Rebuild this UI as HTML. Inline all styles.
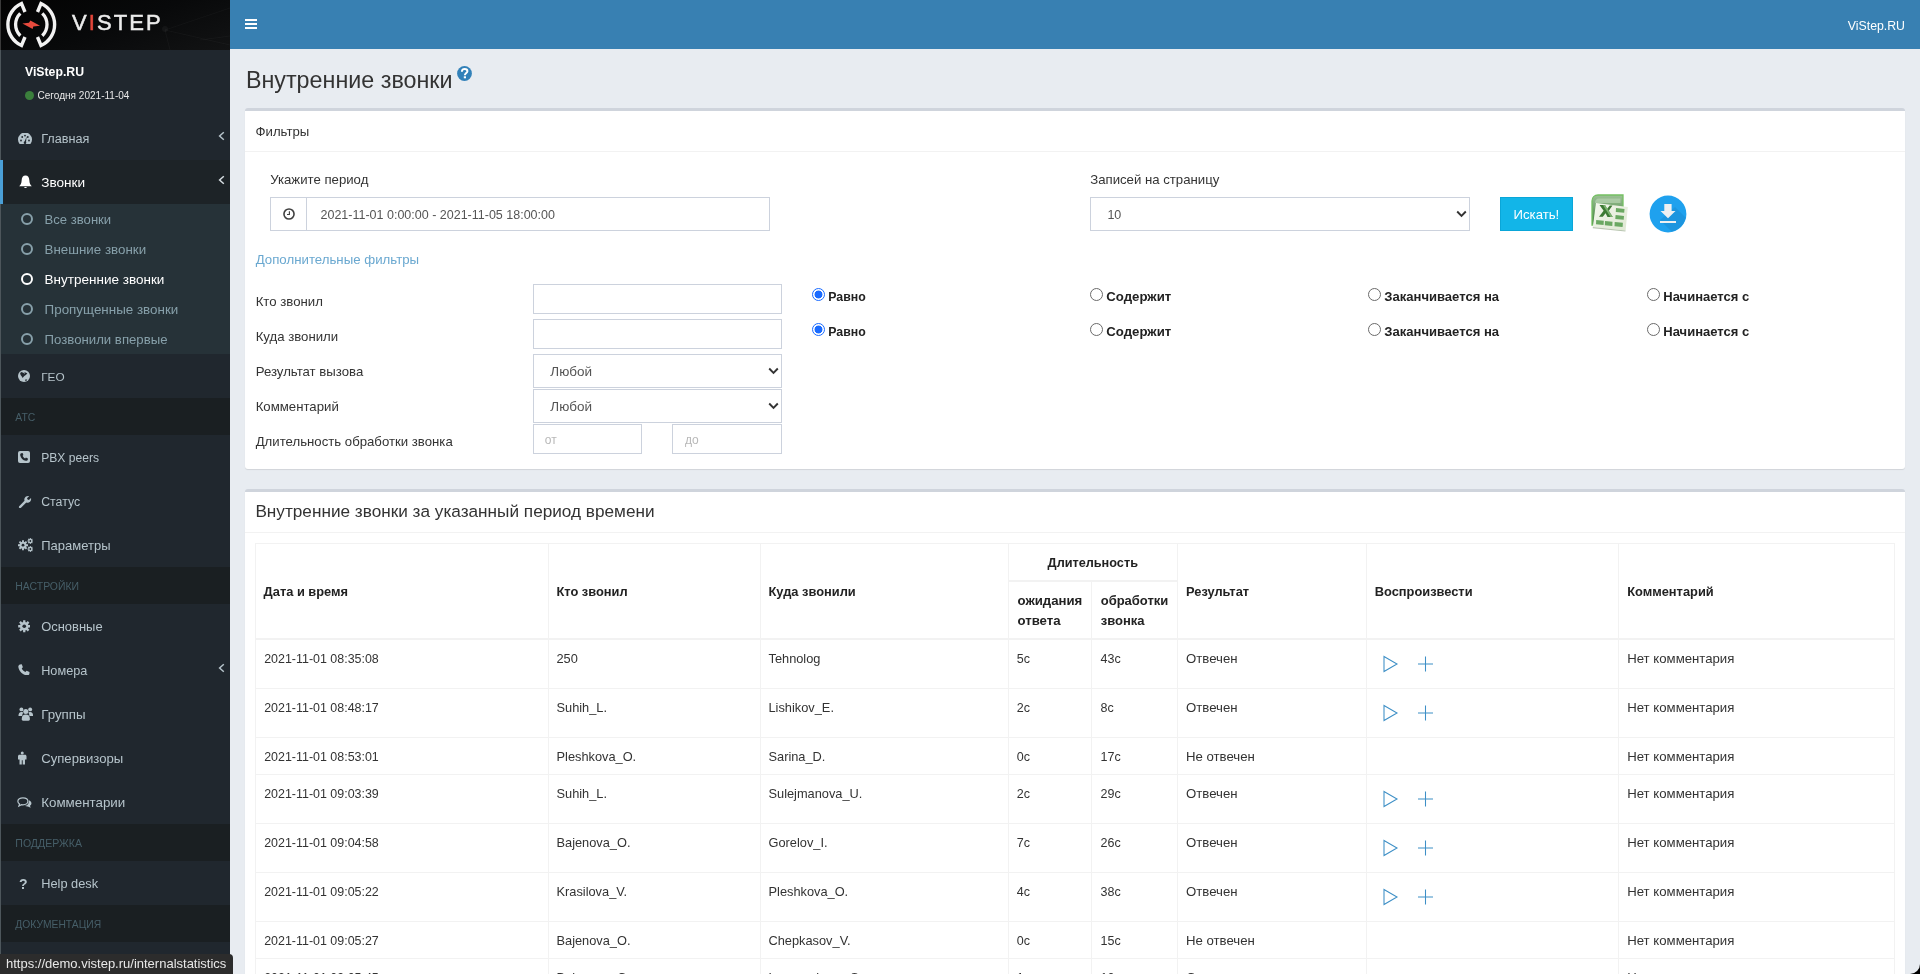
<!DOCTYPE html>
<html><head><meta charset="utf-8">
<style>
*{box-sizing:border-box;margin:0;padding:0}
html,body{width:1920px;height:974px;overflow:hidden}
body{position:relative;background:#e8ecf1;font-family:"Liberation Sans",sans-serif;color:#333;font-size:13px}
.t{position:absolute;line-height:1;white-space:nowrap;color:#333}
.r{position:absolute}
.box{background:#fff;border-top:3px solid #cfd4dc;border-radius:3px;box-shadow:0 1px 1px rgba(0,0,0,0.1)}
.inp{background:#fff;border:1px solid #ccd2dd}
.rad{position:absolute;width:13px;height:13px;border-radius:50%;border:1px solid #6a6a6a;background:#fff}
.rad.on{border:1.5px solid #1a6bff;background:radial-gradient(circle,#1a6bff 0,#1a6bff 3.6px,#fff 4.3px)}
</style></head><body>
<div style="position:absolute;left:0;top:0;width:1920px;height:974px;will-change:transform">
<div class="r " style="left:0px;top:0px;width:230px;height:50px;background:linear-gradient(160deg,#030303 0%,#08090a 50%,#121314 100%);overflow:hidden"></div>
<svg class="r" style="left:130px;top:0px" width="100" height="50" viewBox="0 0 100 50"><g stroke="rgba(255,255,255,0.03)" stroke-width="1" fill="none"><path d="M35 30 L100 8 M35 30 L100 45 M35 30 L40 50 M70 40 L100 36"/></g><circle cx="35" cy="29" r="3" fill="rgba(255,255,255,0.04)"/></svg>
<svg class="r" style="left:0px;top:0px" width="64" height="50" viewBox="0 0 64 50"><g fill="none" stroke="#f2f2f2" stroke-width="3.4"><path d="M25 12 L21.5 3.5 A23 23 0 0 0 21.5 45.5 L25 37"/><path d="M37.5 12 L41 3.5 A23 23 0 0 1 41 45.5 L37.5 37"/></g><g fill="none" stroke="#f2f2f2" stroke-width="3.3"><path d="M20.3 13.4 A15.7 15.7 0 0 0 20.3 35.8"/><path d="M42.3 13.4 A15.7 15.7 0 0 1 42.3 35.8"/></g><path d="M22.4 23.4 L29 22.8 L30.4 20.6 L40 25.7 L33.3 26.4 L32.7 28.9 Z" fill="#e84a3d"/></svg>
<div class="t" style="left:72px;top:11px;font-size:22px;letter-spacing:2.1px;color:#ececec;line-height:24px;-webkit-text-stroke-width:0.5px">V<span style="color:#e5473b">I</span>STEP</div>
<div class="r " style="left:0px;top:0px;width:1px;height:50px;background:#3a3a3a"></div>
<div class="r " style="left:230px;top:0px;width:1690px;height:49px;background:#3880b2"></div>
<div class="r " style="left:245px;top:19px;width:12px;height:2px;background:#fff"></div>
<div class="r " style="left:245px;top:23px;width:12px;height:2px;background:#fff"></div>
<div class="r " style="left:245px;top:27px;width:12px;height:2px;background:#fff"></div>
<div class="t" style="left:1847.8px;top:20.00px;font-size:12.3px;color:#fff">ViStep.RU</div>
<div class="r " style="left:0px;top:50px;width:230px;height:924px;background:#20272e"></div>
<div class="r " style="left:0px;top:50px;width:1px;height:924px;background:#4d565b"></div>
<div class="t" style="left:25px;top:66.00px;font-size:12.25px;font-weight:bold;color:#fff">ViStep.RU</div>
<div class="r " style="left:25px;top:90.5px;width:9px;height:9px;background:#3b7f3c;border-radius:50%"></div>
<div class="t" style="left:37.5px;top:91.00px;font-size:10.05px;color:#e8e8e8">Сегодня 2021-11-04</div>
<svg class="r" style="left:18px;top:133px" width="14" height="11" viewBox="0 0 14 11"><path d="M1.6 11 A7 7 0 1 1 12.4 11 Z" fill="#b6c4cb"/><g fill="#20272e"><circle cx="3" cy="7.5" r="0.9"/><circle cx="4.2" cy="4" r="0.9"/><circle cx="7" cy="2.6" r="0.9"/><circle cx="9.8" cy="4" r="0.9"/><circle cx="11" cy="7.5" r="0.9"/><path d="M6 10 L8.6 3.6 L7.9 10 Z"/><circle cx="7" cy="9.7" r="1.3"/></g></svg>
<div class="t" style="left:41.2px;top:133.00px;font-size:12.65px;color:#b6c4cb">Главная</div>
<svg class="r" style="left:217px;top:131px" width="9" height="10" viewBox="0 0 9 10"><path d="M6.8 1.2 L2.6 5 L6.8 8.8" fill="none" stroke="#b6c4cb" stroke-width="1.5"/></svg>
<div class="r " style="left:0px;top:160px;width:230px;height:44px;background:#1d2327"></div>
<div class="r " style="left:0px;top:160px;width:3px;height:44px;background:#4a9fd6"></div>
<svg class="r" style="left:18.5px;top:175px" width="13" height="14" viewBox="0 0 13 14"><path d="M6.5 0.5 C9 0.5 10.2 2.5 10.3 5 C10.4 8.5 11.5 10 12.8 11.3 L0.2 11.3 C1.5 10 2.6 8.5 2.7 5 C2.8 2.5 4 0.5 6.5 0.5 Z M5 12 A1.6 1.6 0 0 0 8 12 Z" fill="#fff"/></svg>
<div class="t" style="left:41.2px;top:176.00px;font-size:13.6px;color:#fff">Звонки</div>
<svg class="r" style="left:217px;top:175px" width="9" height="10" viewBox="0 0 9 10"><path d="M6.8 1.2 L2.6 5 L6.8 8.8" fill="none" stroke="#d8dfe3" stroke-width="1.5"/></svg>
<div class="r " style="left:0px;top:204px;width:230px;height:150px;background:#263238"></div>
<div class="r " style="left:21px;top:213px;width:12px;height:12px;border:2px solid #87a0aa;border-radius:50%"></div>
<div class="t" style="left:44.6px;top:213.00px;font-size:13.1px;color:#87a0aa">Все звонки</div>
<div class="r " style="left:21px;top:243px;width:12px;height:12px;border:2px solid #87a0aa;border-radius:50%"></div>
<div class="t" style="left:44.6px;top:243.00px;font-size:13.35px;color:#87a0aa">Внешние звонки</div>
<div class="r " style="left:21px;top:273px;width:12px;height:12px;border:2px solid #fff;border-radius:50%"></div>
<div class="t" style="left:44.6px;top:273.00px;font-size:13.5px;color:#fff">Внутренние звонки</div>
<div class="r " style="left:21px;top:303px;width:12px;height:12px;border:2px solid #87a0aa;border-radius:50%"></div>
<div class="t" style="left:44.6px;top:303.00px;font-size:13.4px;color:#87a0aa">Пропущенные звонки</div>
<div class="r " style="left:21px;top:333px;width:12px;height:12px;border:2px solid #87a0aa;border-radius:50%"></div>
<div class="t" style="left:44.6px;top:333.00px;font-size:13.2px;color:#87a0aa">Позвонили впервые</div>
<svg class="r" style="left:18px;top:370px" width="12" height="12" viewBox="0 0 12 12"><circle cx="6" cy="6" r="6" fill="#b6c4cb"/><path d="M2.1 3.1 L3.6 2 L5.6 2.9 L6.4 2.2 L7.6 2.6 L9.4 3.4 L7.8 4.9 L6.3 5.9 L5.4 6.9 L4.7 8.1 L3.8 6.6 L2.6 4.9 Z M7.2 9.4 L9.3 9.5 L8.5 10.8 L7.3 11.1 Z" fill="#20272e"/><circle cx="6.4" cy="3.0" r="0.6" fill="#b6c4cb"/></svg>
<div class="t" style="left:41.2px;top:372.00px;font-size:11.8px;color:#b6c4cb">ГЕО</div>
<div class="r " style="left:0px;top:398px;width:230px;height:37px;background:#1a1f22"></div>
<div class="t" style="left:15.3px;top:413.00px;font-size:10.4px;color:#465e68">АТС</div>
<svg class="r" style="left:18px;top:451px" width="12" height="12" viewBox="0 0 12 12"><rect x="0" y="0" width="12" height="12" rx="2" fill="#b6c4cb"/><path d="M3.2 2.2 L4.6 2 L5.4 4 L4.6 4.8 C5 6 5.9 7 7.1 7.4 L7.9 6.6 L9.9 7.4 L9.8 8.8 C9.5 9.6 8.7 9.9 7.8 9.8 C5 9.3 2.7 7 2.2 4.2 C2.1 3.3 2.5 2.5 3.2 2.2 Z" fill="#20272e"/></svg>
<div class="t" style="left:41.2px;top:452.00px;font-size:12.1px;color:#b6c4cb">PBX peers</div>
<svg class="r" style="left:17.8px;top:495px" width="14" height="13" viewBox="0 0 14 13"><path d="M1.2 11.2 L6.5 5.8 C6 4.2 6.5 2.5 8 1.5 C9 0.9 10.2 0.8 11.2 1.1 L9 3.3 L9.6 4.6 L10.9 5.1 L13 3 C13.3 4.1 13.1 5.3 12.4 6.2 C11.4 7.5 9.8 8 8.3 7.5 L3 12.8 C2.5 13.3 1.7 13.3 1.2 12.8 C0.7 12.4 0.7 11.7 1.2 11.2 Z" fill="#b6c4cb"/></svg>
<div class="t" style="left:41.2px;top:496.00px;font-size:12.3px;color:#b6c4cb">Статус</div>
<svg class="r" style="left:17.8px;top:538px" width="15.5" height="14" viewBox="0 0 15.5 14"><g fill="#b6c4cb"><circle cx="5" cy="7.2" r="3.5"/><circle cx="12.3" cy="3" r="2.0"/><circle cx="12.3" cy="11" r="2.0"/></g><path d="M0.00 7.20 L10.00 7.20 M1.46 3.66 L8.54 10.74 M5.00 2.20 L5.00 12.20 M8.54 3.66 L1.46 10.74 " stroke="#b6c4cb" stroke-width="1.9"/><path d="M9.40 3.00 L15.20 3.00 M10.25 0.95 L14.35 5.05 M12.30 0.10 L12.30 5.90 M14.35 0.95 L10.25 5.05 M9.40 11.00 L15.20 11.00 M10.25 8.95 L14.35 13.05 M12.30 8.10 L12.30 13.90 M14.35 8.95 L10.25 13.05 " stroke="#b6c4cb" stroke-width="1.1"/><g fill="#20272e"><circle cx="5" cy="7.2" r="1.4"/><circle cx="12.3" cy="3" r="0.9"/><circle cx="12.3" cy="11" r="0.9"/></g></svg>
<div class="t" style="left:41.2px;top:539.00px;font-size:13.0px;color:#b6c4cb">Параметры</div>
<div class="r " style="left:0px;top:567px;width:230px;height:37px;background:#1a1f22"></div>
<div class="t" style="left:15.3px;top:582.00px;font-size:10.45px;color:#465e68">НАСТРОЙКИ</div>
<svg class="r" style="left:17.8px;top:620px" width="12.5" height="12.5" viewBox="0 0 13 13"><g fill="#b6c4cb"><circle cx="6.5" cy="6.5" r="4.5"/><g stroke="#b6c4cb" stroke-width="2.4"><path d="M6.5 0.2 V12.8 M0.2 6.5 H12.8 M2 2 L11 11 M11 2 L2 11"/></g></g><circle cx="6.5" cy="6.5" r="1.9" fill="#20272e"/></svg>
<div class="t" style="left:41.2px;top:621.00px;font-size:12.95px;color:#b6c4cb">Основные</div>
<svg class="r" style="left:17.8px;top:663.6px" width="11.8" height="11.8" viewBox="0 0 12 12"><path d="M1.8 0.4 L3.8 0.2 L5 3.2 L3.8 4.4 C4.4 6 5.8 7.5 7.5 8.1 L8.7 6.9 L11.7 8.1 L11.6 10.1 C11.2 11.4 10 11.8 8.8 11.6 C4.7 10.9 1.1 7.3 0.4 3.2 C0.2 2 0.6 0.9 1.8 0.4 Z" fill="#b6c4cb"/></svg>
<div class="t" style="left:41.2px;top:665.00px;font-size:12.7px;color:#b6c4cb">Номера</div>
<svg class="r" style="left:217px;top:663px" width="9" height="10" viewBox="0 0 9 10"><path d="M6.8 1.2 L2.6 5 L6.8 8.8" fill="none" stroke="#b6c4cb" stroke-width="1.5"/></svg>
<svg class="r" style="left:17.8px;top:706.7px" width="15.6" height="14" viewBox="0 0 16 14"><g fill="#b6c4cb"><circle cx="3.5" cy="2.3" r="2"/><circle cx="12.5" cy="2.3" r="2"/><circle cx="8" cy="4.5" r="2.6"/><path d="M0.5 9 C0.5 6.5 1.5 5 3.5 5 C4.5 5 5 5.3 5.3 5.6 C4.6 6.5 4.3 7.6 4.3 9 Z"/><path d="M15.5 9 C15.5 6.5 14.5 5 12.5 5 C11.5 5 11 5.3 10.7 5.6 C11.4 6.5 11.7 7.6 11.7 9 Z"/><path d="M3.8 12.5 C3.8 9 5.3 7.6 8 7.6 C10.7 7.6 12.2 9 12.2 12.5 C12.2 13.3 11.6 13.8 10.8 13.8 H5.2 C4.4 13.8 3.8 13.3 3.8 12.5 Z"/></g></svg>
<div class="t" style="left:41.2px;top:708.00px;font-size:13.3px;color:#b6c4cb">Группы</div>
<svg class="r" style="left:18px;top:751.2px" width="8.5" height="14" viewBox="0 0 9 14"><g fill="#b6c4cb"><circle cx="4.5" cy="1.6" r="1.6"/><path d="M1.5 3.6 H7.5 C8.3 3.6 9 4.3 9 5.1 V8.6 H7.4 V14 H5 V9.4 H4 V14 H1.6 V8.6 H0 V5.1 C0 4.3 0.7 3.6 1.5 3.6 Z"/></g></svg>
<div class="t" style="left:41.2px;top:752.00px;font-size:13.15px;color:#b6c4cb">Супервизоры</div>
<svg class="r" style="left:17.4px;top:796.5px" width="15" height="11.5" viewBox="0 0 16 12"><g fill="none" stroke="#b6c4cb" stroke-width="1.3"><path d="M6.3 0.8 C9.4 0.8 11.6 2.4 11.6 4.5 C11.6 6.6 9.4 8.2 6.3 8.2 C5.8 8.2 5.3 8.2 4.8 8.1 L2 9.6 L2.7 7.4 C1.5 6.7 0.9 5.7 0.9 4.5 C0.9 2.4 3.2 0.8 6.3 0.8 Z"/></g><path d="M12.6 3.2 C14.3 3.8 15.4 5 15.4 6.5 C15.4 7.6 14.8 8.5 13.8 9.1 L14.6 11.4 L11.6 9.9 C10.6 10 9.3 9.8 8.2 9.2 C10.9 8.9 12.9 7.3 12.6 3.2 Z" fill="#b6c4cb"/></svg>
<div class="t" style="left:41.2px;top:796.00px;font-size:13.35px;color:#b6c4cb">Комментарии</div>
<div class="r " style="left:0px;top:824px;width:230px;height:37px;background:#1a1f22"></div>
<div class="t" style="left:15.3px;top:838.00px;font-size:10.55px;color:#465e68">ПОДДЕРЖКА</div>
<div class="t" style="left:19px;top:877.00px;font-size:14.0px;font-weight:bold;color:#b6c4cb">?</div>
<div class="t" style="left:41.2px;top:878.00px;font-size:12.8px;color:#b6c4cb">Help desk</div>
<div class="r " style="left:0px;top:905px;width:230px;height:37px;background:#1a1f22"></div>
<div class="t" style="left:15.3px;top:920.00px;font-size:10.3px;color:#465e68">ДОКУМЕНТАЦИЯ</div>
<div class="r " style="left:0px;top:50px;width:1px;height:924px;background:#4d565b"></div>
<div class="r " style="left:0px;top:160px;width:3px;height:44px;background:#4a9fd6"></div>
<div class="t" style="left:245.9px;top:69.00px;font-size:23.3px;color:#333">Внутренние звонки</div>
<svg class="r" style="left:457px;top:65.5px" width="15" height="15" viewBox="0 0 15 15"><circle cx="7.5" cy="7.5" r="7.4" fill="#3281b9"/><path d="M4.9 5.7 C4.9 3.7 6.2 2.9 7.6 2.9 C9.3 2.9 10.4 3.9 10.4 5.2 C10.4 6.9 7.9 7.1 7.9 9.3" fill="none" stroke="#fff" stroke-width="2"/><rect x="6.8" y="10.3" width="2.2" height="2" fill="#fff"/></svg>
<div class="r box" style="left:245px;top:108px;width:1660px;height:361px;"></div>
<div class="r " style="left:245px;top:151px;width:1660px;height:1px;background:#f2f2f2"></div>
<div class="t" style="left:255.5px;top:125.00px;font-size:13.2px">Фильтры</div>
<div class="t" style="left:270.2px;top:173.00px;font-size:13.2px">Укажите период</div>
<div class="r inp" style="left:270px;top:197px;width:500px;height:34px;"></div>
<div class="r " style="left:306px;top:197px;width:1px;height:34px;background:#ccd2dd"></div>
<svg class="r" style="left:283px;top:208px" width="12" height="12" viewBox="0 0 12 12"><circle cx="6" cy="6" r="5.05" fill="none" stroke="#404040" stroke-width="1.6"/><path d="M6.4 3.3 V6.5 H4" fill="none" stroke="#404040" stroke-width="1.15"/></svg>
<div class="t" style="left:320.5px;top:209.00px;font-size:12.5px;color:#555">2021-11-01 0:00:00 - 2021-11-05 18:00:00</div>
<div class="t" style="left:1090.2px;top:173.00px;font-size:13.2px">Записей на страницу</div>
<div class="r inp" style="left:1090px;top:197px;width:380px;height:34px;"></div>
<div class="t" style="left:1107.4px;top:209.00px;font-size:12.5px;color:#555">10</div>
<svg class="r" style="left:1456px;top:210px" width="11" height="8" viewBox="0 0 11 8"><path d="M1.2 1.5 L5.5 5.8 L9.8 1.5" fill="none" stroke="#333" stroke-width="1.9"/></svg>
<div class="r " style="left:1500px;top:197px;width:73px;height:34px;background:#12b5e8;border:1px solid #0aa6d8"></div>
<div class="t" style="left:1513.5px;top:208.00px;font-size:13.2px;color:#fff">Искать!</div>
<svg class="r" style="left:1589px;top:193px" width="40" height="40" viewBox="0 0 40 40">
<defs><linearGradient id="xg" x1="0" y1="0" x2="0" y2="1"><stop offset="0" stop-color="#9cc196"/><stop offset="1" stop-color="#3f7f3a"/></linearGradient>
<linearGradient id="sg" x1="0" y1="0" x2="1" y2="1"><stop offset="0" stop-color="#f4f7ee"/><stop offset="1" stop-color="#dfe8d3"/></linearGradient></defs>
<path d="M9 2 H34 V32 H3 V8 C3 4.5 5.5 2 9 2 Z" fill="url(#xg)" stroke="#74c062" stroke-width="1.3"/>
<path d="M6 10 C6 7 7.5 5.5 10 5.5 H31.5 V10 Z" fill="#c5dcc0" opacity="0.55"/>
<path d="M7 10 L38.8 13.9 L36.6 37.4 L3.8 34.1 Z" fill="url(#sg)"/>
<path d="M3.8 34.1 L36.6 37.4 L36.4 38.6 L3.8 35.3 Z" fill="#b9c6b0"/>
<g fill="#6aa862">
<path d="M27 15 L35.5 16 L35.2 19.8 L26.8 18.9 Z"/><path d="M26.6 22 L35 22.9 L34.7 26.8 L26.3 26 Z"/>
<path d="M7.2 27 L14.8 27.8 L14.6 32 L7 31.2 Z"/><path d="M16 28 L23.5 28.8 L23.3 33 L15.8 32.2 Z"/><path d="M25.7 29 L33.9 29.8 L33.6 34 L25.5 33.2 Z"/>
</g>
<path d="M10.5 12 H16 L18.2 15.8 L20.8 12.4 H23.5 L19.8 17.8 L23.8 24 H18.5 L16.6 20.2 L13.8 23.8 H10 L14.6 17.8 Z" fill="#3d7a35"/>
<path d="M16 12 L23.8 24 H21.5 L14 12.2 Z" fill="#8cc07f" opacity="0.8"/>
</svg>
<svg class="r" style="left:1649px;top:195px" width="38" height="38" viewBox="0 0 38 38">
<circle cx="19" cy="19" r="18.4" fill="#1fa1ee"/>
<path d="M26 12 L36.8 22.8 A18.4 18.4 0 0 1 22.8 36.8 L11 25 Z" fill="#1a8ed6" opacity="0.6"/>
<path d="M15.3 9 H22.6 V16 H26.5 L19 23.2 L11.5 16 H15.3 Z" fill="#eef0f2"/>
<rect x="11" y="26" width="16" height="2" fill="#eef0f2"/>
</svg>
<div class="t" style="left:255.7px;top:253.00px;font-size:13.25px;color:#6aa8d0">Дополнительные фильтры</div>
<div class="t" style="left:255.7px;top:295.00px;font-size:13.2px">Кто звонил</div>
<div class="t" style="left:255.7px;top:330.00px;font-size:13.2px">Куда звонили</div>
<div class="t" style="left:255.7px;top:365.00px;font-size:13.2px">Результат вызова</div>
<div class="t" style="left:255.7px;top:400.00px;font-size:13.2px">Комментарий</div>
<div class="t" style="left:255.7px;top:435.00px;font-size:13.2px">Длительность обработки звонка</div>
<div class="r inp" style="left:533px;top:284px;width:249px;height:30px;"></div>
<div class="r inp" style="left:533px;top:319px;width:249px;height:30px;"></div>
<div class="r inp" style="left:533px;top:354px;width:249px;height:34px;"></div>
<div class="r inp" style="left:533px;top:389px;width:249px;height:34px;"></div>
<div class="r inp" style="left:533px;top:424px;width:109px;height:30px;"></div>
<div class="r inp" style="left:672px;top:424px;width:110px;height:30px;"></div>
<div class="t" style="left:550.3px;top:365.00px;font-size:13.5px;color:#555">Любой</div>
<svg class="r" style="left:768px;top:367px" width="11" height="8" viewBox="0 0 11 8"><path d="M1.2 1.5 L5.5 5.8 L9.8 1.5" fill="none" stroke="#333" stroke-width="1.9"/></svg>
<div class="t" style="left:550.3px;top:400.00px;font-size:13.5px;color:#555">Любой</div>
<svg class="r" style="left:768px;top:402px" width="11" height="8" viewBox="0 0 11 8"><path d="M1.2 1.5 L5.5 5.8 L9.8 1.5" fill="none" stroke="#333" stroke-width="1.9"/></svg>
<div class="t" style="left:544.8px;top:434.00px;font-size:12.0px;color:#b8b8b8">от</div>
<div class="t" style="left:685px;top:434.00px;font-size:12.0px;color:#b8b8b8">до</div>
<div class="rad on" style="left:812px;top:288px"></div>
<div class="t" style="left:828.3px;top:291.00px;font-size:12.3px;font-weight:bold;color:#222">Равно</div>
<div class="rad" style="left:1090px;top:288px"></div>
<div class="t" style="left:1106.3px;top:290.00px;font-size:13.2px;font-weight:bold;color:#222">Содержит</div>
<div class="rad" style="left:1368px;top:288px"></div>
<div class="t" style="left:1384.3px;top:290.00px;font-size:13.05px;font-weight:bold;color:#222">Заканчивается на</div>
<div class="rad" style="left:1647px;top:288px"></div>
<div class="t" style="left:1663.3px;top:290.00px;font-size:13.0px;font-weight:bold;color:#222">Начинается с</div>
<div class="rad on" style="left:812px;top:323px"></div>
<div class="t" style="left:828.3px;top:326.00px;font-size:12.3px;font-weight:bold;color:#222">Равно</div>
<div class="rad" style="left:1090px;top:323px"></div>
<div class="t" style="left:1106.3px;top:325.00px;font-size:13.2px;font-weight:bold;color:#222">Содержит</div>
<div class="rad" style="left:1368px;top:323px"></div>
<div class="t" style="left:1384.3px;top:325.00px;font-size:13.05px;font-weight:bold;color:#222">Заканчивается на</div>
<div class="rad" style="left:1647px;top:323px"></div>
<div class="t" style="left:1663.3px;top:325.00px;font-size:13.0px;font-weight:bold;color:#222">Начинается с</div>
<div class="r box" style="left:245px;top:489px;width:1660px;height:500px;"></div>
<div class="r " style="left:245px;top:532px;width:1660px;height:1px;background:#f2f2f2"></div>
<div class="t" style="left:255.4px;top:503.00px;font-size:17.2px">Внутренние звонки за указанный период времени</div>
<div class="r " style="left:255px;top:543px;width:1640px;height:1px;background:#f2f2f2"></div>
<div class="r " style="left:255px;top:638px;width:1640px;height:2px;background:#f2f2f2"></div>
<div class="r " style="left:1008px;top:580px;width:169px;height:2px;background:#f2f2f2"></div>
<div class="r " style="left:256px;top:688px;width:1638px;height:1px;background:#f2f2f2"></div>
<div class="r " style="left:256px;top:737px;width:1638px;height:1px;background:#f2f2f2"></div>
<div class="r " style="left:256px;top:774px;width:1638px;height:1px;background:#f2f2f2"></div>
<div class="r " style="left:256px;top:823px;width:1638px;height:1px;background:#f2f2f2"></div>
<div class="r " style="left:256px;top:872px;width:1638px;height:1px;background:#f2f2f2"></div>
<div class="r " style="left:256px;top:921px;width:1638px;height:1px;background:#f2f2f2"></div>
<div class="r " style="left:256px;top:958px;width:1638px;height:1px;background:#f2f2f2"></div>
<div class="r " style="left:256px;top:1007px;width:1638px;height:1px;background:#f2f2f2"></div>
<div class="r " style="left:255px;top:543px;width:1px;height:465px;background:#f2f2f2"></div>
<div class="r " style="left:548px;top:543px;width:1px;height:465px;background:#f2f2f2"></div>
<div class="r " style="left:760px;top:543px;width:1px;height:465px;background:#f2f2f2"></div>
<div class="r " style="left:1008px;top:543px;width:1px;height:465px;background:#f2f2f2"></div>
<div class="r " style="left:1091px;top:580px;width:1px;height:428px;background:#f2f2f2"></div>
<div class="r " style="left:1177px;top:543px;width:1px;height:465px;background:#f2f2f2"></div>
<div class="r " style="left:1366px;top:543px;width:1px;height:465px;background:#f2f2f2"></div>
<div class="r " style="left:1618px;top:543px;width:1px;height:465px;background:#f2f2f2"></div>
<div class="r " style="left:1894px;top:543px;width:1px;height:465px;background:#f2f2f2"></div>
<div class="t" style="left:263.6px;top:586.00px;font-size:12.85px;font-weight:bold;color:#222">Дата и время</div>
<div class="t" style="left:556.5px;top:586.00px;font-size:12.85px;font-weight:bold;color:#222">Кто звонил</div>
<div class="t" style="left:768.5px;top:586.00px;font-size:12.85px;font-weight:bold;color:#222">Куда звонили</div>
<div class="t" style="left:1186px;top:586.00px;font-size:12.85px;font-weight:bold;color:#222">Результат</div>
<div class="t" style="left:1374.7px;top:586.00px;font-size:12.85px;font-weight:bold;color:#222">Воспроизвести</div>
<div class="t" style="left:1627.2px;top:586.00px;font-size:12.85px;font-weight:bold;color:#222">Комментарий</div>
<div class="t" style="left:1047.6px;top:557.00px;font-size:12.7px;font-weight:bold;color:#222">Длительность</div>
<div class="t" style="left:1017.5px;top:594.00px;font-size:13.2px;font-weight:bold;color:#222">ожидания</div>
<div class="t" style="left:1017.5px;top:614.00px;font-size:13.2px;font-weight:bold;color:#222">ответа</div>
<div class="t" style="left:1100.7px;top:594.00px;font-size:13.0px;font-weight:bold;color:#222">обработки</div>
<div class="t" style="left:1100.7px;top:614.00px;font-size:13.0px;font-weight:bold;color:#222">звонка</div>
<div class="t" style="left:264.2px;top:653.00px;font-size:12.45px">2021-11-01 08:35:08</div>
<div class="t" style="left:556.5px;top:653.00px;font-size:12.8px">250</div>
<div class="t" style="left:768.5px;top:653.00px;font-size:12.8px">Tehnolog</div>
<div class="t" style="left:1016.8px;top:653.00px;font-size:12.5px">5c</div>
<div class="t" style="left:1100.6px;top:653.00px;font-size:12.5px">43с</div>
<div class="t" style="left:1186px;top:652.00px;font-size:13.2px">Отвечен</div>
<div class="t" style="left:1627.2px;top:652.00px;font-size:13.2px">Нет комментария</div>
<svg class="r" style="left:1382px;top:655px" width="17" height="18" viewBox="0 0 17 18"><path d="M2 1.5 L15 9 L2 16.5 Z" fill="none" stroke="#3d8fc6" stroke-width="1.05" stroke-linejoin="miter"/></svg>
<svg class="r" style="left:1417px;top:655px" width="17" height="18" viewBox="0 0 17 18"><path d="M8.5 1.5 V16.5 M1 9 H16" fill="none" stroke="#3d8fc6" stroke-width="1.05"/></svg>
<div class="t" style="left:264.2px;top:702.00px;font-size:12.45px">2021-11-01 08:48:17</div>
<div class="t" style="left:556.5px;top:702.00px;font-size:12.8px">Suhih_L.</div>
<div class="t" style="left:768.5px;top:702.00px;font-size:12.8px">Lishikov_E.</div>
<div class="t" style="left:1016.8px;top:702.00px;font-size:12.5px">2c</div>
<div class="t" style="left:1100.6px;top:702.00px;font-size:12.5px">8c</div>
<div class="t" style="left:1186px;top:701.00px;font-size:13.2px">Отвечен</div>
<div class="t" style="left:1627.2px;top:701.00px;font-size:13.2px">Нет комментария</div>
<svg class="r" style="left:1382px;top:704px" width="17" height="18" viewBox="0 0 17 18"><path d="M2 1.5 L15 9 L2 16.5 Z" fill="none" stroke="#3d8fc6" stroke-width="1.05" stroke-linejoin="miter"/></svg>
<svg class="r" style="left:1417px;top:704px" width="17" height="18" viewBox="0 0 17 18"><path d="M8.5 1.5 V16.5 M1 9 H16" fill="none" stroke="#3d8fc6" stroke-width="1.05"/></svg>
<div class="t" style="left:264.2px;top:751.00px;font-size:12.45px">2021-11-01 08:53:01</div>
<div class="t" style="left:556.5px;top:751.00px;font-size:12.8px">Pleshkova_O.</div>
<div class="t" style="left:768.5px;top:751.00px;font-size:12.8px">Sarina_D.</div>
<div class="t" style="left:1016.8px;top:751.00px;font-size:12.5px">0c</div>
<div class="t" style="left:1100.6px;top:751.00px;font-size:12.5px">17c</div>
<div class="t" style="left:1186px;top:750.00px;font-size:13.2px">Не отвечен</div>
<div class="t" style="left:1627.2px;top:750.00px;font-size:13.2px">Нет комментария</div>
<div class="t" style="left:264.2px;top:788.00px;font-size:12.45px">2021-11-01 09:03:39</div>
<div class="t" style="left:556.5px;top:788.00px;font-size:12.8px">Suhih_L.</div>
<div class="t" style="left:768.5px;top:788.00px;font-size:12.8px">Sulejmanova_U.</div>
<div class="t" style="left:1016.8px;top:788.00px;font-size:12.5px">2c</div>
<div class="t" style="left:1100.6px;top:788.00px;font-size:12.5px">29c</div>
<div class="t" style="left:1186px;top:787.00px;font-size:13.2px">Отвечен</div>
<div class="t" style="left:1627.2px;top:787.00px;font-size:13.2px">Нет комментария</div>
<svg class="r" style="left:1382px;top:790px" width="17" height="18" viewBox="0 0 17 18"><path d="M2 1.5 L15 9 L2 16.5 Z" fill="none" stroke="#3d8fc6" stroke-width="1.05" stroke-linejoin="miter"/></svg>
<svg class="r" style="left:1417px;top:790px" width="17" height="18" viewBox="0 0 17 18"><path d="M8.5 1.5 V16.5 M1 9 H16" fill="none" stroke="#3d8fc6" stroke-width="1.05"/></svg>
<div class="t" style="left:264.2px;top:837.00px;font-size:12.45px">2021-11-01 09:04:58</div>
<div class="t" style="left:556.5px;top:837.00px;font-size:12.8px">Bajenova_O.</div>
<div class="t" style="left:768.5px;top:837.00px;font-size:12.8px">Gorelov_I.</div>
<div class="t" style="left:1016.8px;top:837.00px;font-size:12.5px">7c</div>
<div class="t" style="left:1100.6px;top:837.00px;font-size:12.5px">26c</div>
<div class="t" style="left:1186px;top:836.00px;font-size:13.2px">Отвечен</div>
<div class="t" style="left:1627.2px;top:836.00px;font-size:13.2px">Нет комментария</div>
<svg class="r" style="left:1382px;top:839px" width="17" height="18" viewBox="0 0 17 18"><path d="M2 1.5 L15 9 L2 16.5 Z" fill="none" stroke="#3d8fc6" stroke-width="1.05" stroke-linejoin="miter"/></svg>
<svg class="r" style="left:1417px;top:839px" width="17" height="18" viewBox="0 0 17 18"><path d="M8.5 1.5 V16.5 M1 9 H16" fill="none" stroke="#3d8fc6" stroke-width="1.05"/></svg>
<div class="t" style="left:264.2px;top:886.00px;font-size:12.45px">2021-11-01 09:05:22</div>
<div class="t" style="left:556.5px;top:886.00px;font-size:12.8px">Krasilova_V.</div>
<div class="t" style="left:768.5px;top:886.00px;font-size:12.8px">Pleshkova_O.</div>
<div class="t" style="left:1016.8px;top:886.00px;font-size:12.5px">4c</div>
<div class="t" style="left:1100.6px;top:886.00px;font-size:12.5px">38c</div>
<div class="t" style="left:1186px;top:885.00px;font-size:13.2px">Отвечен</div>
<div class="t" style="left:1627.2px;top:885.00px;font-size:13.2px">Нет комментария</div>
<svg class="r" style="left:1382px;top:888px" width="17" height="18" viewBox="0 0 17 18"><path d="M2 1.5 L15 9 L2 16.5 Z" fill="none" stroke="#3d8fc6" stroke-width="1.05" stroke-linejoin="miter"/></svg>
<svg class="r" style="left:1417px;top:888px" width="17" height="18" viewBox="0 0 17 18"><path d="M8.5 1.5 V16.5 M1 9 H16" fill="none" stroke="#3d8fc6" stroke-width="1.05"/></svg>
<div class="t" style="left:264.2px;top:935.00px;font-size:12.45px">2021-11-01 09:05:27</div>
<div class="t" style="left:556.5px;top:935.00px;font-size:12.8px">Bajenova_O.</div>
<div class="t" style="left:768.5px;top:935.00px;font-size:12.8px">Chepkasov_V.</div>
<div class="t" style="left:1016.8px;top:935.00px;font-size:12.5px">0c</div>
<div class="t" style="left:1100.6px;top:935.00px;font-size:12.5px">15c</div>
<div class="t" style="left:1186px;top:934.00px;font-size:13.2px">Не отвечен</div>
<div class="t" style="left:1627.2px;top:934.00px;font-size:13.2px">Нет комментария</div>
<div class="t" style="left:264.2px;top:972.00px;font-size:12.45px">2021-11-01 09:05:45</div>
<div class="t" style="left:556.5px;top:972.00px;font-size:12.8px">Bajenova_O.</div>
<div class="t" style="left:768.5px;top:972.00px;font-size:12.8px">Lesnevskaya_S.</div>
<div class="t" style="left:1016.8px;top:972.00px;font-size:12.5px">1c</div>
<div class="t" style="left:1100.6px;top:972.00px;font-size:12.5px">12c</div>
<div class="t" style="left:1186px;top:971.00px;font-size:13.2px">Отвечен</div>
<div class="t" style="left:1627.2px;top:971.00px;font-size:13.2px">Нет комментария</div>
<svg class="r" style="left:1382px;top:974px" width="17" height="18" viewBox="0 0 17 18"><path d="M2 1.5 L15 9 L2 16.5 Z" fill="none" stroke="#3d8fc6" stroke-width="1.05" stroke-linejoin="miter"/></svg>
<svg class="r" style="left:1417px;top:974px" width="17" height="18" viewBox="0 0 17 18"><path d="M8.5 1.5 V16.5 M1 9 H16" fill="none" stroke="#3d8fc6" stroke-width="1.05"/></svg>
<div class="r" style="left:1906px;top:960px;width:14px;height:14px;overflow:hidden"><div style="position:absolute;left:-10px;top:-10px;width:24px;height:24px;border-bottom-right-radius:10px;box-shadow:0 0 0 12px #000"></div></div>
<div class="r" style="left:0;top:954px;width:233px;height:20px;background:#2c2c2c;border-top-right-radius:4px"></div>
<div class="t" style="left:6px;top:957.00px;font-size:13.0px;color:#e8e8e8">https://demo.vistep.ru/internalstatistics</div>
</div></body></html>
